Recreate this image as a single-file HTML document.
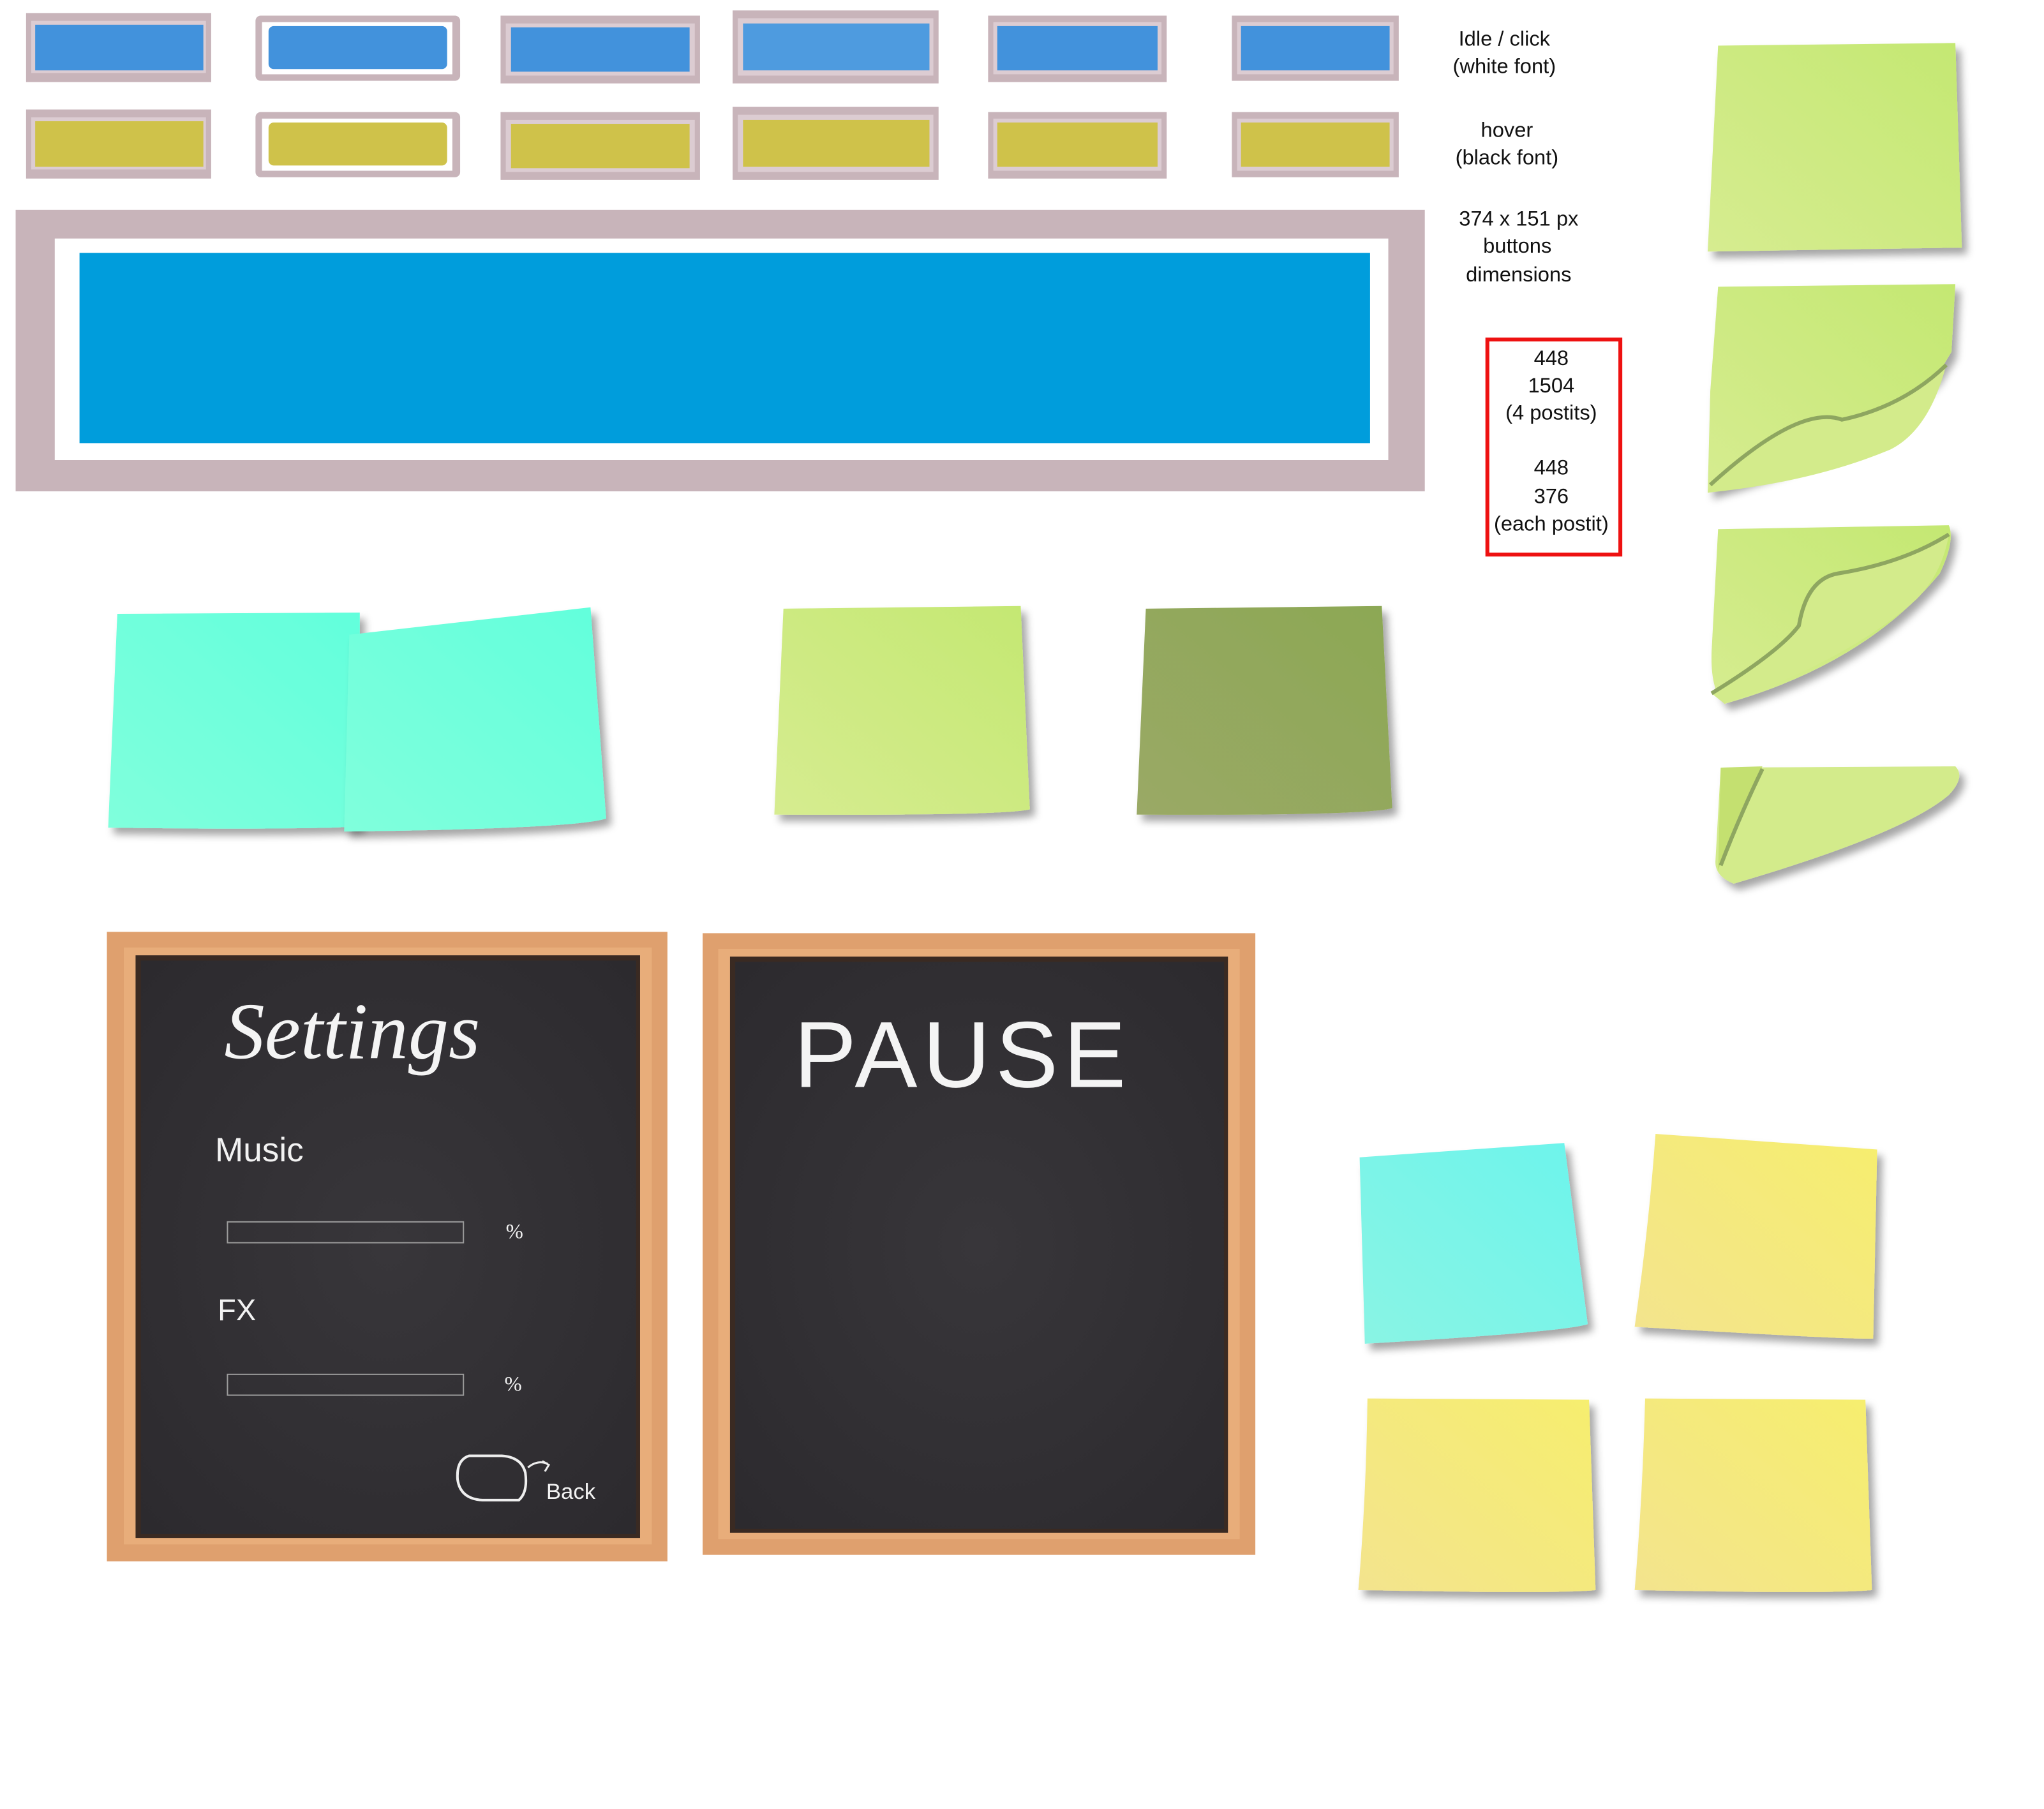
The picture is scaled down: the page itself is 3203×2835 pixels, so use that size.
<!DOCTYPE html>
<html><head><meta charset="utf-8"><style>
html,body{margin:0;padding:0;background:#fff;}
svg{display:block;}
</style></head><body>
<svg width="3203" height="2835" viewBox="0 0 1568 1388" preserveAspectRatio="none" xmlns="http://www.w3.org/2000/svg">
<defs>
<linearGradient id="g1" x1="0" y1="1" x2="1" y2="0"><stop offset="0" stop-color="#d6ec90"/><stop offset="1" stop-color="#c4e872"/></linearGradient>
<linearGradient id="g2" x1="0" y1="1" x2="1" y2="0"><stop offset="0" stop-color="#9aa966"/><stop offset="1" stop-color="#8ca854"/></linearGradient>
<linearGradient id="c1" x1="0" y1="1" x2="1" y2="0"><stop offset="0" stop-color="#80ffdc"/><stop offset="1" stop-color="#62ffdc"/></linearGradient>
<linearGradient id="c2" x1="0" y1="1" x2="1" y2="0"><stop offset="0" stop-color="#8af4e4"/><stop offset="1" stop-color="#6cf4ec"/></linearGradient>
<linearGradient id="y1" x1="0" y1="1" x2="1" y2="0"><stop offset="0" stop-color="#f3e48e"/><stop offset="1" stop-color="#f6ee6e"/></linearGradient>
<filter id="sh" x="-10%" y="-10%" width="130%" height="130%"><feDropShadow dx="4" dy="5" stdDeviation="3" flood-color="#000" flood-opacity="0.35"/></filter>
<radialGradient id="bb" cx="0.5" cy="0.5" r="0.7"><stop offset="0" stop-color="#38363a"/><stop offset="1" stop-color="#2c2a2e"/></radialGradient>
</defs>

<g>
<rect x="20" y="10" width="142" height="53" fill="#c8b4ba"/><rect x="24" y="16" width="134" height="40" fill="#dcccd2"/><rect x="27" y="19" width="129" height="35" fill="#4292dc"/>
<rect x="196" y="12" width="157" height="50" rx="4" fill="#c8b4ba"/><rect x="201" y="17" width="146" height="40" fill="#fff"/><rect x="206" y="20" width="137" height="33" rx="4" fill="#4292dc"/>
<rect x="384" y="12" width="153" height="52" fill="#c8b4ba"/><rect x="388" y="18" width="145" height="40" fill="#dcccd2"/><rect x="392" y="21" width="137" height="34" fill="#4292dc"/>
<rect x="562" y="8" width="158" height="56" fill="#c8b4ba"/><rect x="566" y="14" width="150" height="44" fill="#dcccd2"/><rect x="570" y="18" width="143" height="36" fill="#4e9bdf"/>
<rect x="758" y="12" width="137" height="51" fill="#c8b4ba"/><rect x="762" y="17" width="129" height="40" fill="#dcccd2"/><rect x="765" y="20" width="123" height="34" fill="#4292dc"/>
<rect x="945" y="12" width="128" height="50" fill="#c8b4ba"/><rect x="949" y="17" width="120" height="40" fill="#dcccd2"/><rect x="952" y="20" width="114" height="34" fill="#4292dc"/>
</g>
<g>
<rect x="20" y="84" width="142" height="53" fill="#c8b4ba"/><rect x="24" y="90" width="134" height="40" fill="#dcccd2"/><rect x="27" y="93" width="129" height="35" fill="#cfc24a"/>
<rect x="196" y="86" width="157" height="50" rx="4" fill="#c8b4ba"/><rect x="201" y="91" width="146" height="40" fill="#fff"/><rect x="206" y="94" width="137" height="33" rx="4" fill="#cfc24a"/>
<rect x="384" y="86" width="153" height="52" fill="#c8b4ba"/><rect x="388" y="92" width="145" height="40" fill="#dcccd2"/><rect x="392" y="95" width="137" height="34" fill="#cfc24a"/>
<rect x="562" y="82" width="158" height="56" fill="#c8b4ba"/><rect x="566" y="88" width="150" height="44" fill="#dcccd2"/><rect x="570" y="92" width="143" height="36" fill="#cfc24a"/>
<rect x="758" y="86" width="137" height="51" fill="#c8b4ba"/><rect x="762" y="91" width="129" height="40" fill="#dcccd2"/><rect x="765" y="94" width="123" height="34" fill="#cfc24a"/>
<rect x="945" y="86" width="128" height="50" fill="#c8b4ba"/><rect x="949" y="91" width="120" height="40" fill="#dcccd2"/><rect x="952" y="94" width="114" height="34" fill="#cfc24a"/>
</g>

<rect x="12" y="161" width="1081" height="216" fill="#c8b4ba"/>
<rect x="42" y="183" width="1023" height="170" fill="#fff"/>
<rect x="61" y="194" width="990" height="146" fill="#009ddc"/>

<g font-family="Liberation Sans, sans-serif" font-size="16" fill="#111" text-anchor="middle">
<text x="1154" y="35">Idle / click</text>
<text x="1154" y="56">(white font)</text>
<text x="1156" y="105">hover</text>
<text x="1156" y="126">(black font)</text>
<text x="1165" y="173">374 x 151 px</text>
<text x="1164" y="194">buttons</text>
<text x="1165" y="216">dimensions</text>
<text x="1190" y="280">448</text>
<text x="1190" y="301">1504</text>
<text x="1190" y="322">(4 postits)</text>
<text x="1190" y="364">448</text>
<text x="1190" y="386">376</text>
<text x="1190" y="407">(each postit)</text>
</g>
<rect x="1141" y="260.5" width="102" height="165" fill="none" stroke="#ee1111" stroke-width="3"/>

<path d="M1318 35 L1500 33 L1505 190 L1310 193 Z" fill="url(#g1)" filter="url(#sh)"/>
<path d="M1318 220 L1500 218 L1497 270 L1485 290 Q1430 345 1310 378 L1312 300 Z" fill="url(#g1)" filter="url(#sh)"/>
<path d="M1312 372 Q1380 310 1413 322 Q1460 312 1493 280 Q1480 330 1450 345 Q1390 370 1310 378 Z" fill="#d3eb8b"/>
<path d="M1312 372 Q1380 310 1413 322 Q1460 312 1493 280" fill="none" stroke="#8ea660" stroke-width="3"/>
<path d="M1318 406 L1495 403 Q1500 415 1488 440 Q1430 510 1323 540 Q1312 530 1313 500 Z" fill="url(#g1)" filter="url(#sh)"/>
<path d="M1313 532 Q1365 495 1380 480 Q1388 444 1410 440 Q1460 430 1495 410 Q1490 440 1470 460 Q1420 505 1323 540 Z" fill="#d3eb8b"/>
<path d="M1313 532 Q1365 500 1380 480 Q1386 444 1410 440 Q1460 432 1495 410" fill="none" stroke="#8ea660" stroke-width="3"/>
<path d="M1320 589 L1500 588 Q1508 596 1495 610 Q1460 640 1330 678 Q1315 672 1316 660 Z" fill="#d3eb8b" filter="url(#sh)"/>
<path d="M1320 589 L1352 588 Q1330 630 1318 668 Z" fill="#c4e070"/>
<path d="M1352 590 Q1335 625 1320 664" fill="none" stroke="#8ea660" stroke-width="3"/>

<path d="M90 471 L276 470 L276 634 Q230 637 83 635 Z" fill="url(#c1)" filter="url(#sh)"/>
<path d="M268 487 L453 466 L465 628 Q440 636 264 638 Z" fill="url(#c1)" filter="url(#sh)"/>
<path d="M601 467 L783 465 L790 621 Q770 626 594 625 Z" fill="url(#g1)" filter="url(#sh)"/>
<path d="M879 467 L1060 465 L1068 620 Q1050 626 872 625 Z" fill="url(#g2)" filter="url(#sh)"/>

<rect x="82" y="715" width="430" height="483" fill="#dfa06e"/>
<rect x="95" y="727" width="405" height="458" fill="#e8ad7a"/>
<rect x="104" y="733" width="387" height="447" fill="#3a2a22"/>
<rect x="108" y="737" width="380" height="440" fill="url(#bb)"/>
<g fill="#f2f2f2">
<text x="172" y="812" font-family="Liberation Serif, serif" font-style="italic" font-size="62" fill="#f4f4f4">Settings</text>
<text x="165" y="891" font-family="Liberation Sans, sans-serif" font-size="26">Music</text>
<text x="167" y="1013" font-family="Liberation Sans, sans-serif" font-size="23">FX</text>
<text x="388" y="950" font-family="Liberation Serif, serif" font-size="16">%</text>
<text x="387" y="1067" font-family="Liberation Serif, serif" font-size="16">%</text>
<text x="419" y="1150" font-family="Liberation Sans, sans-serif" font-size="17">Back</text>
</g>
<rect x="174.5" y="937.5" width="181" height="16" fill="none" stroke="#9a9a9a" stroke-width="1"/>
<rect x="174.5" y="1054.5" width="181" height="16" fill="none" stroke="#9a9a9a" stroke-width="1"/>
<path d="M360 1117 Q350 1120 351 1135 Q353 1150 370 1151 L398 1151 Q405 1145 403 1130 Q400 1118 385 1117 Z" fill="none" stroke="#eee" stroke-width="2"/>
<path d="M405 1126 Q412 1120 420 1123 M416 1121 L421 1124 L418 1129" fill="none" stroke="#eee" stroke-width="1.5"/>

<rect x="539" y="716" width="424" height="477" fill="#dfa06e"/>
<rect x="551" y="728" width="400" height="453" fill="#e8ad7a"/>
<rect x="560" y="734" width="382" height="442" fill="#3a2a22"/>
<rect x="564" y="738" width="375" height="435" fill="url(#bb)"/>
<text x="609" y="834" font-family="Liberation Sans, sans-serif" font-size="72" fill="#f4f4f4" letter-spacing="4">PAUSE</text>

<path d="M1043 888 L1200 877 L1218 1016 Q1200 1022 1047 1031 Z" fill="url(#c2)" filter="url(#sh)"/>
<path d="M1270 870 L1440 882 L1437 1027 Q1420 1028 1254 1018 Q1265 940 1270 870 Z" fill="url(#y1)" filter="url(#sh)"/>
<path d="M1049 1073 L1219 1074 L1224 1220 Q1200 1223 1042 1220 Q1048 1150 1049 1073 Z" fill="url(#y1)" filter="url(#sh)"/>
<path d="M1262 1073 L1431 1074 L1436 1220 Q1410 1223 1254 1220 Q1260 1150 1262 1073 Z" fill="url(#y1)" filter="url(#sh)"/>
</svg>
</body></html>
